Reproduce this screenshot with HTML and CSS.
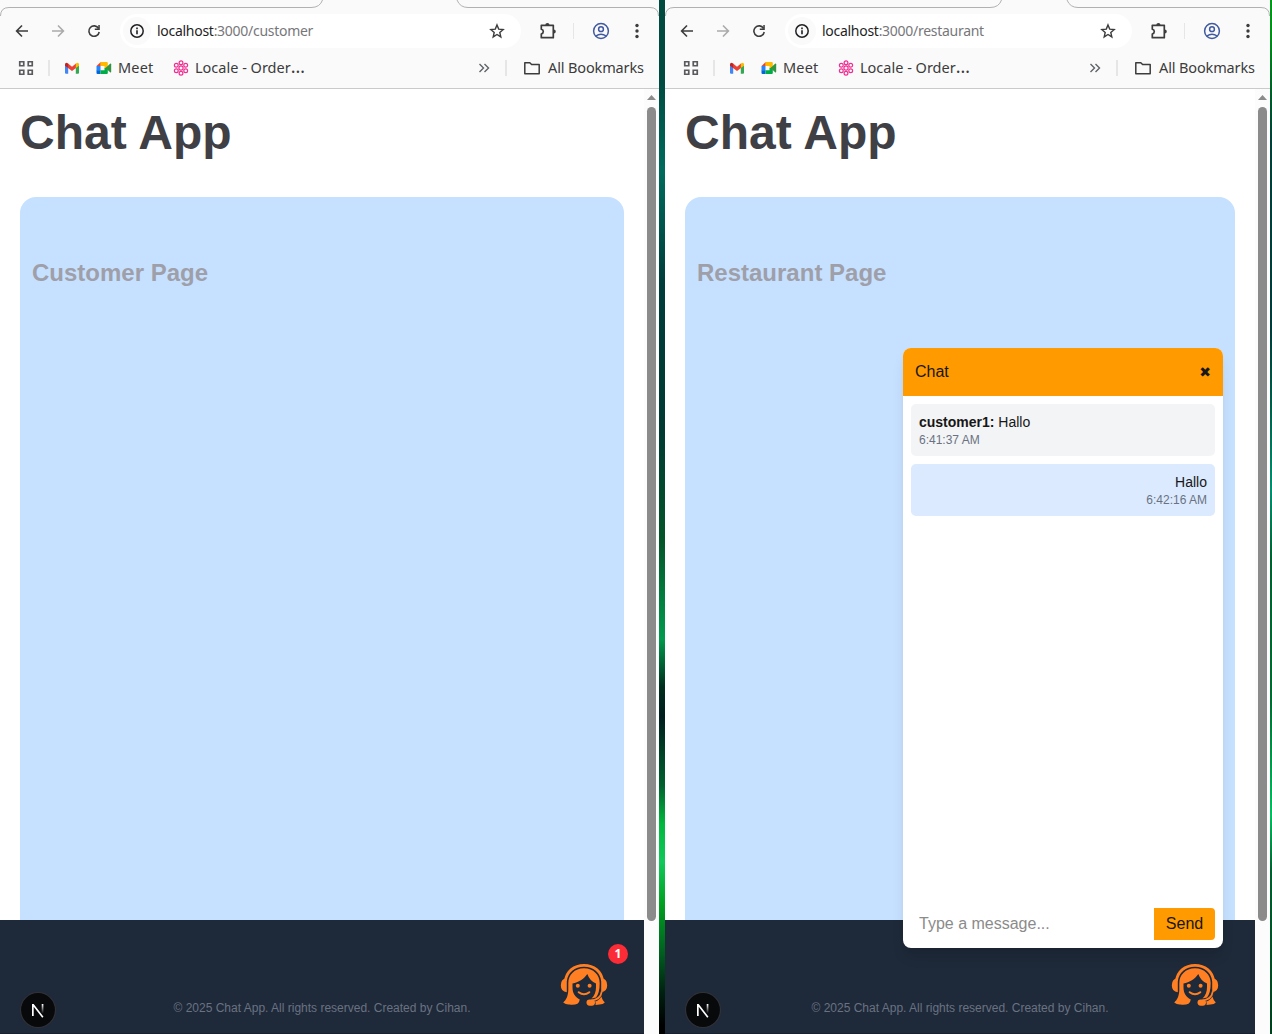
FILE: index.html
```html
<!DOCTYPE html>
<html lang="en">
<head>
<meta charset="utf-8">
<title>Chat App</title>
<link rel="stylesheet" href="styles.css">
</head>
<body>
<svg class="sprite" aria-hidden="true">
  <defs>
    <linearGradient id="nfade" x1="0" y1="0" x2="0" y2="1"><stop offset="0" stop-color="#fff"/><stop offset="1" stop-color="#fff" stop-opacity="0"/></linearGradient>
    <symbol id="back" viewBox="0 0 16 16"><path d="M14 8H3M8 2.500 2.600 8 8 13.500" fill="none" stroke="currentColor" stroke-width="1.600"/></symbol>
    <symbol id="forward" viewBox="0 0 16 16"><path d="M2 8h11M8 2.500 13.400 8 8 13.500" fill="none" stroke="currentColor" stroke-width="1.600"/></symbol>
    <symbol id="reload" viewBox="0 0 16 16"><path d="M12.600 5.500A5.200 5.200 0 1 0 13.200 9" fill="none" stroke="currentColor" stroke-width="1.600"/><path d="M13.800 2v5H8.800V5.500h3.500V2z" fill="currentColor"/></symbol>
    <symbol id="info" viewBox="0 0 16 16"><circle cx="8" cy="8" r="6.200" fill="none" stroke="currentColor" stroke-width="1.500"/><path d="M7.200 7.200h1.600v4H7.200zM7.200 4.600h1.600v1.600H7.200z" fill="currentColor"/></symbol>
    <symbol id="star" viewBox="0 0 16 16"><path d="m8 1.900 1.700 4.200 4.500.4-3.400 3 1 4.400L8 11.500l-3.800 2.400 1-4.400-3.400-3 4.500-.4z" fill="none" stroke="currentColor" stroke-width="1.400"/></symbol>
    <symbol id="puzzle" viewBox="0 0 18 18"><path d="M2.300 3.300h12v12.400h-12v-3.700q2-.6 2-2.400t-2-2.300z" fill="none" stroke="currentColor" stroke-width="1.700" stroke-linejoin="round"/><path d="M6.300 3a2.100 2.100 0 0 1 4.200 0zM14.700 7.400a2.100 2.100 0 0 1 0 4.200z" fill="currentColor"/></symbol>
    <symbol id="profile" viewBox="0 0 18 18"><g fill="none" stroke="currentColor" stroke-width="1.500"><circle cx="9" cy="9" r="7.400"/><circle cx="9" cy="7.200" r="2.400"/><path d="M3.800 14q5.200-3.600 10.400 0"/></g></symbol>
    <symbol id="dots" viewBox="0 0 16 16"><g fill="currentColor"><circle cx="8" cy="2.500" r="1.700"/><circle cx="8" cy="8" r="1.700"/><circle cx="8" cy="13.500" r="1.700"/></g></symbol>
    <symbol id="grid" viewBox="0 0 16 16"><path d="M1.750 1.750h4v4h-4zM10.250 1.750h4v4h-4zM1.750 10.250h4v4h-4zM10.250 10.250h4v4h-4z" fill="none" stroke="currentColor" stroke-width="1.700"/></symbol>
    <symbol id="gmail" viewBox="0 0 16 16"><path d="M1 4v8.800q0 1 1 1h2.200V6z" fill="#4285f4"/><path d="M11.800 6v7.800H14q1 0 1-1V4z" fill="#34a853"/><path d="m4 3.500 4 3.200 4-3.200v4.400L8 11l-4-3.100z" fill="#ea4335"/><path d="M1 4.400Q1 2.700 2.500 2.700L4.200 3.600v4.500L1 5.700z" fill="#c5221f"/><path d="M15 4.400q0-1.700-1.500-1.700l-1.700.9v4.500L15 5.700z" fill="#fbbc04"/></symbol>
    <symbol id="meet" viewBox="0 0 16 16"><path d="M.5 6 4.800 2v4z" fill="#ea4335"/><path d="M.5 6h4v4.500h-4z" fill="#2684fc"/><path d="M.5 10.300h4v3.700H1.500q-1 0-1-1z" fill="#0066da"/><path d="M4.500 2h6.300q1 0 1 1v5.200H8.500V6h-4z" fill="#ffba00"/><path d="M4.500 10.300h4V8h3.300v5q0 1-1 1H4.500z" fill="#00ac47"/><path d="m9.500 8 4.600-4.200q1.100-.7 1.100.5v7.400q0 1.200-1.100.5z" fill="#34933f"/></symbol>
    <symbol id="flower" viewBox="0 0 16 16"><g fill="none" stroke="#f02d91" stroke-width="1.200"><circle cx="8" cy="8" r="2.100"/><circle cx="8" cy="2.800" r="1.900"/><circle cx="8" cy="13.200" r="1.900"/><circle cx="3.300" cy="5.300" r="1.900"/><circle cx="12.700" cy="5.300" r="1.900"/><circle cx="3.300" cy="10.700" r="1.900"/><circle cx="12.700" cy="10.700" r="1.900"/></g></symbol>
    <symbol id="chevrons" viewBox="0 0 16 16"><path d="m3.500 4 4 4-4 4M8.500 4l4 4-4 4" fill="none" stroke="currentColor" stroke-width="1.400"/></symbol>
    <symbol id="folder" viewBox="0 0 18 16"><path d="M1.800 2.700h5l1.800 1.900h7.600v9.100H1.800z" fill="none" stroke="currentColor" stroke-width="1.500" stroke-linejoin="round"/></symbol>
    <symbol id="agent" viewBox="0 0 48 44">
      <path d="M5.400 18C6.500 8.500 14 2.300 24 2.300S41.500 8.500 42.600 18" fill="none" stroke="#ff7f22" stroke-width="2.800"/>
      <path d="M6.800 15v14.300Q.8 28.500.8 22.200T6.800 15zM41.200 15v14.300q6-.8 6-7.100T41.200 15z" fill="#ff7f22"/>
      <path d="M24 5.200C14.500 5.200 8.300 12 8.300 20v7C8 33 6.500 36.500 3.200 39.500q2.800 2.400 6.300 2 4.500.8 8-.8 1.800-1 2.300-4.200C14.800 34 12.500 30 12.500 24v-3.500c6-1 11.500-4.500 14.800-9.500 1.700 4.500 4.700 8 8.700 9.500v3.500c0 5-1.500 8.700-4.500 11.500l4.500-1Q39.700 30 39.700 20C39.700 12 33.500 5.200 24 5.200z" fill="#ff7f22"/>
      <path d="M41.800 28.500c-.8 5-4.200 8.500-10.600 9" fill="none" stroke="#ff7f22" stroke-width="1.700"/>
      <path d="M41.300 33.500q1 3.500 3.500 6-1.500 2-5.300 2l-4 .5q.6-2.500-.5-3.500 4-.8 6.300-5z" fill="#ff7f22"/>
      <rect x="26.500" y="36.400" width="8.500" height="6.300" rx="3.100" fill="#ff7f22"/>
      <circle cx="17.800" cy="22.700" r="2" fill="#ff7f22"/><circle cx="29.600" cy="22.700" r="2" fill="#ff7f22"/>
      <path d="M18.700 29.200q5.300 4 10.600 0" fill="none" stroke="#ff7f22" stroke-width="2" stroke-linecap="round"/>
    </symbol>
    <symbol id="next" viewBox="0 0 36 36"><circle cx="18" cy="18" r="17.500" fill="#08090b" stroke="#303138" stroke-width="1.200"/><path d="M12 24V12h1.700l9.800 12.800-1.300 1L13.700 14.700V24z" fill="#fff"/><path d="M21.700 12h1.700v9.500h-1.700z" fill="url(#nfade)"/></symbol>
  </defs>
</svg>

<main class="desktop">
  <section class="window">
    <header class="chrome">
      <svg class="tabline" width="659" height="16"><path d="M.5 16Q.5 7.500 9 7.500H311Q320 7.500 322.500 0M457 0Q460 7.500 468 7.500H650Q658.500 7.500 658.500 16"/></svg>
      <div class="toolbar">
        <div class="nav"><svg><use href="#back"/></svg><svg class="dim"><use href="#forward"/></svg><svg><use href="#reload"/></svg></div>
        <div class="omnibox"><span class="site"><svg><use href="#info"/></svg></span><span class="url"><b>localhost</b>:3000/customer</span><svg class="fav"><use href="#star"/></svg></div>
        <div class="tools"><svg class="big"><use href="#puzzle"/></svg><i class="sep"></i><svg class="big blue"><use href="#profile"/></svg><svg><use href="#dots"/></svg></div>
      </div>
      <nav class="bookmarks">
        <svg class="apps"><use href="#grid"/></svg><i class="sep"></i><svg class="gmail"><use href="#gmail"/></svg><svg class="meet"><use href="#meet"/></svg><span class="t-meet">Meet</span><svg class="locale"><use href="#flower"/></svg><span class="t-locale">Locale - Order<span class="dots">…</span></span>
        <svg class="more"><use href="#chevrons"/></svg><i class="sep"></i><svg class="folder"><use href="#folder"/></svg><span class="t-all">All Bookmarks</span>
      </nav>
    </header>
    <div class="view">
      <div class="page">
        <h1>Chat App</h1>
        <div class="panel"><h2>Customer Page</h2></div>
        <footer><p>© 2025 Chat App. All rights reserved. Created by Cihan.</p></footer>
        <svg class="next"><use href="#next"/></svg>
        <div class="launcher"><svg><use href="#agent"/></svg><span class="count">1</span></div>
      </div>
      <div class="scroll"><i class="up"></i><i class="thumb"></i></div>
    </div>
  </section>
  <div class="wallpaper"></div>
  <section class="window">
    <header class="chrome">
      <svg class="tabline" width="605" height="16"><path d="M.5 16Q.5 7.500 9 7.500H325Q334 7.500 336.500 0M402 0Q405 7.500 413 7.500H596Q604.500 7.500 604.500 16"/></svg>
      <div class="toolbar">
        <div class="nav"><svg><use href="#back"/></svg><svg class="dim"><use href="#forward"/></svg><svg><use href="#reload"/></svg></div>
        <div class="omnibox"><span class="site"><svg><use href="#info"/></svg></span><span class="url"><b>localhost</b>:3000/restaurant</span><svg class="fav"><use href="#star"/></svg></div>
        <div class="tools"><svg class="big"><use href="#puzzle"/></svg><i class="sep"></i><svg class="big blue"><use href="#profile"/></svg><svg><use href="#dots"/></svg></div>
      </div>
      <nav class="bookmarks">
        <svg class="apps"><use href="#grid"/></svg><i class="sep"></i><svg class="gmail"><use href="#gmail"/></svg><svg class="meet"><use href="#meet"/></svg><span class="t-meet">Meet</span><svg class="locale"><use href="#flower"/></svg><span class="t-locale">Locale - Order<span class="dots">…</span></span>
        <svg class="more"><use href="#chevrons"/></svg><i class="sep"></i><svg class="folder"><use href="#folder"/></svg><span class="t-all">All Bookmarks</span>
      </nav>
    </header>
    <div class="view">
      <div class="page">
        <h1>Chat App</h1>
        <div class="panel"><h2>Restaurant Page</h2></div>
        <footer><p>© 2025 Chat App. All rights reserved. Created by Cihan.</p></footer>
        <svg class="next"><use href="#next"/></svg>
        <div class="launcher"><svg><use href="#agent"/></svg></div>
        <aside class="chat">
          <div class="chat-head"><span>Chat</span><span class="close">✖</span></div>
          <div class="messages">
            <div class="msg"><p><strong>customer1:</strong> Hallo</p><time>6:41:37 AM</time></div>
            <div class="msg own"><p>Hallo</p><time>6:42:16 AM</time></div>
          </div>
          <div class="compose"><span class="input">Type a message...</span><span class="send">Send</span></div>
        </aside>
      </div>
      <div class="scroll"><i class="up"></i><i class="thumb"></i></div>
    </div>
  </section>
  <div class="wallpaper edge"></div>
</main>
</body>
</html>
```
FILE: styles.css
```css
* { box-sizing: border-box; margin: 0; padding: 0; }
body { width: 1272px; height: 1034px; overflow: hidden; font-family: "Liberation Sans", Arial, sans-serif; color: #171717; }
svg { display: block; flex: none; width: 16px; height: 16px; }
.sprite { position: absolute; width: 0; height: 0; }
.desktop { display: grid; grid-template-columns: 659px 6px 605px 2px; height: 1034px; }
.window { display: flex; flex-direction: column; min-width: 0; height: 1034px; background: #fff; }
.wallpaper { background: linear-gradient(#004a40 0, #004a40 80px, #006b5c 171px, #003c3a 285px, #003a33 430px, #04552a 541px, #009a4e 639px, #002e1e 687px, #001e1e 716px, #00602f 785px, #00b83e 824px, #10c85c 862px, #00a020 904px, #006020 952px, #002010 993px, #000 1025px); }
.wallpaper.edge { background: linear-gradient(#009a18 0, #009018 35px, #006028 90px, #004038 140px, #003c3a 330px, #00604a 410px, #009070 490px, #00602f 560px, #006b32 700px, #00c060 815px, #006030 870px, #00401c 1034px); }

/* browser chrome */
.chrome { position: relative; height: 89px; padding-top: 8px; background: #fafafa; border-bottom: 1px solid #cacaca; color: #3c3c3c; font-family: "Noto Sans", sans-serif; }
.tabline { position: absolute; left: 0; top: 0; width: auto; fill: none; stroke: #b1b1b1; }
.toolbar { display: flex; align-items: center; height: 46px; padding: 0 14px; }
.nav { display: flex; gap: 20px; width: 106px; }
.dim { color: #aaa; }
.omnibox { display: flex; flex: 1; align-items: center; height: 34px; padding: 0 16px 0 3px; border-radius: 17px; background: #fff; color: #202124; }
.site { display: grid; place-items: center; width: 28px; height: 28px; border-radius: 50%; background: #fafafa; }
.url { flex: 1; margin-left: 6px; padding-bottom: 2px; font-size: 14px; letter-spacing: -.28px; color: #77777a; white-space: nowrap; }
.url b { font-weight: 400; color: #1f1f1f; }
.fav { color: #3c3c3c; }
.tools { display: flex; align-items: center; width: 124px; padding-left: 18px; }
.big { width: 18px; height: 18px; }
.blue { color: #4059a0; margin-right: 19px; }
.sep { width: 2px; height: 16px; background: #e6e6e6; }
.tools .sep { margin: 0 18px 0 16px; }
.bookmarks { display: flex; align-items: center; height: 28px; font-size: 14.500px; line-height: 20px; white-space: nowrap; }
.bookmarks span { position: relative; top: -1px; }
.apps { margin: 0 14px 0 18px; color: #5a5a5e; }
.gmail { margin: 0 16px 0 14px; }
.t-meet { width: 35px; margin: 0 20px 0 6px; letter-spacing: .15px; }
.t-locale { width: 110px; margin-left: 6px; }
.bookmarks .dots { top: 0; letter-spacing: 0; font-size: 18px; line-height: 1; }
.more { margin: 0 13px 0 auto; color: #5f6368; }
.folder { width: 18px; margin: 0 7px 0 16px; }
.t-all { width: 96px; margin-right: 15px; letter-spacing: -.13px; }

/* web page */
.view { display: flex; flex: 1; min-height: 0; }
.page { position: relative; display: flex; flex: 1; flex-direction: column; min-width: 0; }
h1 { height: 88px; margin: 0 20px 20px; padding-top: 16px; font-size: 48px; line-height: 56px; color: #3f3f46; }
.panel { flex: 1; margin: 0 20px; padding: 60px 12px 0; border-radius: 16px 16px 0 0; background: #c6e1ff; }
h2 { font-size: 24px; line-height: 32px; color: #9f9fa9; }
footer { height: 114px; padding-top: 80px; background: #1e2939; border-bottom: 1px solid #18202e; text-align: center; font-size: 12px; line-height: 16px; color: #6a7282; }
.next { position: absolute; left: 20px; bottom: 6px; width: 36px; height: 36px; overflow: visible; }
.launcher { position: absolute; right: 36px; bottom: 27px; }
.launcher svg { width: 48px; height: 44px; }
.count { position: absolute; right: -20px; top: -19px; width: 20px; height: 20px; border-radius: 50%; background: #fb2c36; color: #fff; font: 700 12px/20px "Noto Sans", sans-serif; text-align: center; }
.scroll { width: 15px; padding: 6px 3px 0; background: #fcfcfc; }
.up { display: block; width: 9px; height: 5px; background: #8b8b8b; clip-path: polygon(50% 0, 100% 100%, 0 100%); }
.thumb { display: block; width: 9px; height: 814px; margin-top: 7px; border-radius: 5px; background: #8b8b8b; }

/* chat window */
.chat { position: absolute; right: 32px; bottom: 86px; display: flex; flex-direction: column; width: 320px; height: 600px; border-radius: 8px; background: #fff; box-shadow: 0 10px 15px -3px rgba(0,0,0,.1), 0 4px 6px -4px rgba(0,0,0,.1); overflow: hidden; }
.chat-head { display: flex; align-items: center; justify-content: space-between; height: 48px; padding: 0 12px; background: #ff9a00; font-size: 16px; }
.close { font: 14px/20px "DejaVu Sans", sans-serif; }
.messages { display: flex; flex: 1; flex-direction: column; gap: 8px; padding: 8px; }
.msg { height: 52px; padding: 8px; border-radius: 5px; background: #f3f4f6; font-size: 14px; line-height: 20px; }
.msg time { display: block; font-size: 12px; line-height: 16px; color: #6a7282; }
.own { background: #dbeafe; text-align: right; }
.compose { display: flex; height: 40px; padding: 0 8px 8px; font-size: 16px; line-height: 32px; }
.input { flex: 1; padding-left: 8px; color: #8b8b8b; }
.send { width: 61px; border-radius: 0 4px 4px 0; background: #ff9a00; text-align: center; }
```
